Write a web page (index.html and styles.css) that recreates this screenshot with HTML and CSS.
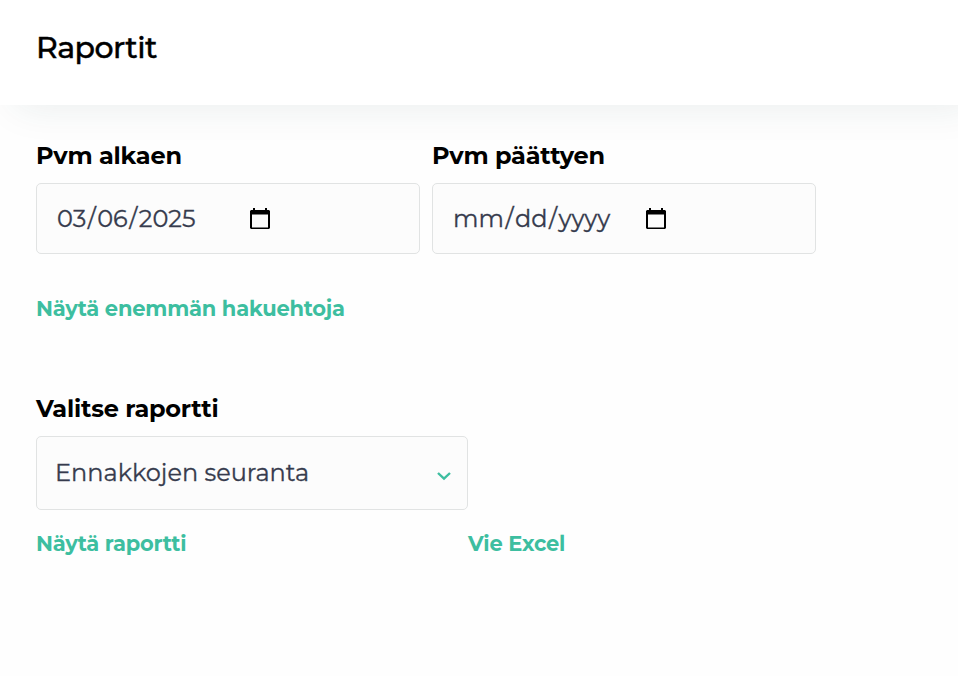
FILE: index.html
```
<!DOCTYPE html>
<html lang="fi">
  <head>
    <meta charset="utf-8" />
    <title>Raportit</title>
    <link rel="stylesheet" href="styles.css">
  </head>
  <body>
    <header class="page-header">
      <h1>Raportit</h1>
    </header>

    <main class="content">
      <div class="date-row">
        <div class="form-group">
          <label>Pvm alkaen</label>
          <div class="date-input">
            <span class="date-value">03<span class="slash">/</span>06<span class="slash">/</span>2025</span>
            <svg class="calendar" viewBox="0 0 20 22">
              <path fill-rule="evenodd" d="M1 2H3V0H5V2H15V0H17V2H19L20 3V20L19 21H1L0 20V3ZM2 6.5V19.5H18V6.5Z" />
            </svg>
          </div>
        </div>

        <div class="form-group">
          <label>Pvm päättyen</label>
          <div class="date-input">
            <span class="date-value">mm<span class="slash">/</span>dd<span class="slash">/</span>yyyy</span>
            <svg class="calendar" viewBox="0 0 20 22">
              <path fill-rule="evenodd" d="M1 2H3V0H5V2H15V0H17V2H19L20 3V20L19 21H1L0 20V3ZM2 6.5V19.5H18V6.5Z" />
            </svg>
          </div>
        </div>
      </div>

      <a class="link more">Näytä enemmän hakuehtoja</a>

      <div class="form-group report">
        <label>Valitse raportti</label>
        <div class="select">
          <span>Ennakkojen seuranta</span>
          <svg class="chevron" viewBox="0 0 14 10">
            <path d="M1 2L7 7.7L13 2" />
          </svg>
        </div>
      </div>

      <div class="actions">
        <a class="link">Näytä raportti</a>
        <a class="link">Vie Excel</a>
      </div>
    </main>
  </body>
</html>
```

FILE: styles.css
```
* {
  box-sizing: border-box;
}
body {
  margin: 0;
  font-family: Montserrat, "Open Sans", sans-serif;
  background: #fefefe;
  color: #000;
}
.page-header {
  height: 105px;
  padding: 28px 36px 0;
  background: #fff;
  box-shadow: 16px 0 40px rgba(30, 70, 65, 0.1);
}
h1 {
  margin: 0;
  font-size: 30px;
  font-weight: 500;
  line-height: 40px;
  letter-spacing: -0.5px;
  -webkit-text-stroke: 0.4px;
}
.content {
  padding: 36px 36px 0;
}
.date-row {
  display: flex;
  gap: 12px;
}
label {
  display: block;
  height: 30px;
  margin-bottom: 12px;
  font-size: 24px;
  font-weight: 700;
  line-height: 30px;
  letter-spacing: -0.22px;
}
.date-input {
  display: flex;
  align-items: center;
  width: 384px;
  height: 71px;
  padding-left: 20px;
  border: 1px solid #e1e3e3;
  border-radius: 5px;
  background: #fcfcfc;
  color: #363b4d;
  font-size: 24px;
  -webkit-text-stroke: 0.3px;
}
.date-value {
  width: 193px;
  padding-bottom: 1px;
}
.slash {
  margin: 0 1.5px;
}
.calendar {
  width: 20px;
  height: 22px;
  fill: #000;
}
.link {
  color: #3dbea0;
  font-size: 21px;
  font-weight: 700;
  line-height: 28px;
  letter-spacing: -0.2px;
}
.more {
  display: block;
  margin-top: 41px;
}
.report {
  margin-top: 71px;
}
.select {
  display: flex;
  align-items: center;
  justify-content: space-between;
  width: 432px;
  height: 74px;
  padding: 0 16px 2px 18px;
  border: 1px solid #e1e3e3;
  border-radius: 5px;
  background: #fcfcfc;
  color: #363b4d;
  font-size: 24px;
  -webkit-text-stroke: 0.3px;
}
.chevron {
  width: 14px;
  height: 10px;
  margin-top: 8px;
  fill: none;
  stroke: #3dbea0;
  stroke-width: 2.4;
}
.actions {
  display: grid;
  grid-template-columns: 432px auto;
  margin-top: 20px;
}
```
